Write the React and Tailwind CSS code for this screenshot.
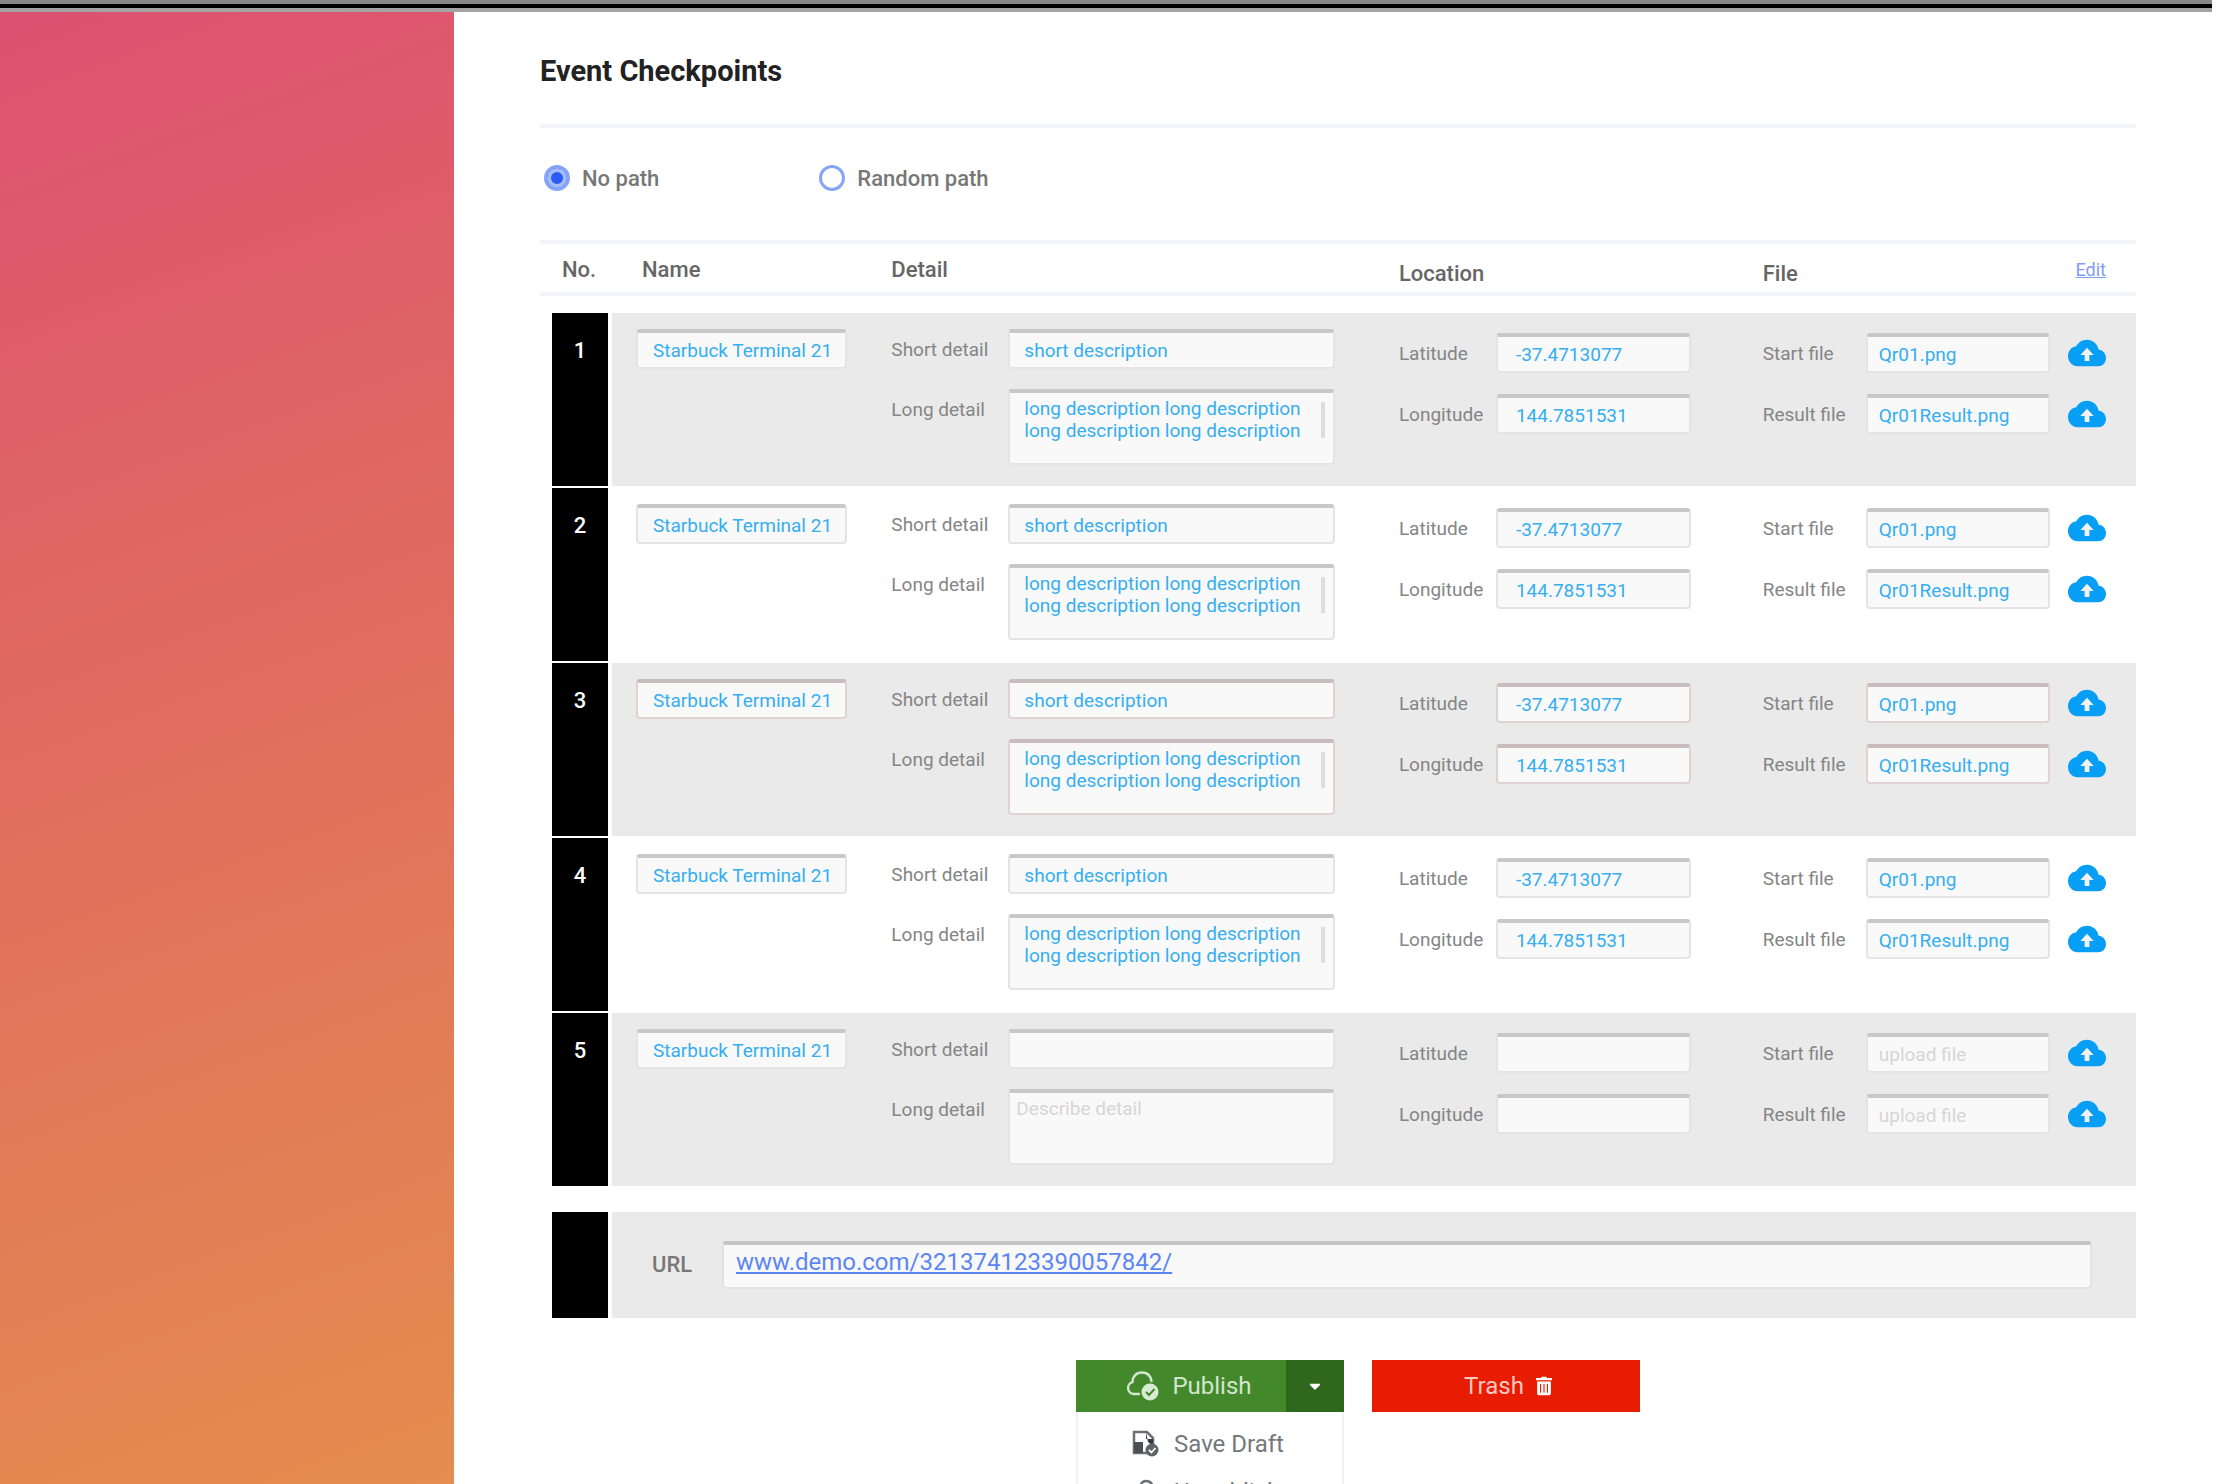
import React from "react";
import { FaTrashAlt, FaCaretDown } from "react-icons/fa";

const rows = [
  { no: 1, filled: true },
  { no: 2, filled: true },
  { no: 3, filled: true, error: true },
  { no: 4, filled: true },
  { no: 5, filled: false },
];

const okField =
  "min-w-0 rounded-[4px] border-2 border-[#e4e4e4] border-t-4 border-t-[#c8c8c8] bg-[#f9f9f9] text-[#35aef2] outline-none placeholder:text-[#d6d6d6]";
const errorField =
  "min-w-0 rounded-[4px] border-2 border-[#e2d2d2] border-t-4 border-t-[#c9bcbc] bg-[#f9f9f9] text-[#35aef2] outline-none placeholder:text-[#d6d6d6]";

function CloudUpload() {
  return (
    <svg viewBox="0 0 40 28" className="h-7 w-[38px]" aria-hidden="true">
      <path
        d="M32.3 10.6C31.2 4.5 26.1 0 20 0 15 0 10.700 2.900 8.600 7 3.600 7.700 0 12 0 17.200 0 23 4.500 28 10 28h21.700C36.300 28 40 24.200 40 19.300c0-4.600-3.500-8.400-7.700-8.700z"
        fill="#069ff5"
      />
      <path d="M20 8.500l-7 7.500h4.500v6.500h5V16H27z" fill="#f2f2f2" />
    </svg>
  );
}

function PublishCloud() {
  return (
    <svg viewBox="0 0 34 30" className="h-[30px] w-[34px]" fill="none" aria-hidden="true">
      <path
        d="M13 23H8a6 6 0 0 1-1.500-11.800C6.500 5 10.500 1.500 16 1.500c5 0 8.500 3 9.500 8.500"
        stroke="#d3e6cd"
        strokeWidth="2.400"
        strokeLinecap="round"
      />
      <circle cx="24" cy="21" r="8.500" fill="#d9ead4" />
      <path d="M20 21l3 3 5.500-6" stroke="#43892c" strokeWidth="2" />
    </svg>
  );
}

function DraftIcon() {
  return (
    <svg viewBox="0 0 28 28" className="h-7 w-7" fill="none" aria-hidden="true">
      <path d="M2 2h13l6 6v15H2z" stroke="#6a7075" strokeWidth="2.500" />
      <path d="M2 12h9v11H2z" fill="#4a4f54" />
      <path d="M14 2v7h7v7l-5-4z" fill="#33383c" />
      <circle cx="20" cy="20" r="6.500" fill="#5d6368" />
      <path d="M17 20l2.500 2.500L23.500 18" stroke="#fff" strokeWidth="1.800" />
    </svg>
  );
}

function UnpublishIcon() {
  return (
    <svg viewBox="0 0 28 28" className="h-7 w-7" fill="none" aria-hidden="true">
      <path
        d="M8 20a6 6 0 0 1 0-11C9 5 11 3 14 3s6 2 7 6a6 6 0 0 1-1 11M14 25V12M10 16l4-4 4 4"
        stroke="#6a7075"
        strokeWidth="2.400"
      />
    </svg>
  );
}

function Field({ id, label, labelClass, error, value, placeholder, pad = "px-[11px]", children }) {
  return (
    <div className="flex h-10 items-center">
      <label htmlFor={id} className={labelClass + " shrink-0 pt-0.5"}>
        {label}
      </label>
      <input
        id={id}
        defaultValue={value}
        placeholder={placeholder}
        className={(error ? errorField : okField) + " h-10 flex-1 " + pad}
      />
      {children}
    </div>
  );
}

function Row({ no, filled, error }) {
  const bg = no % 2 ? "bg-[#eaeaea]" : "bg-white";
  const cell = bg + " h-[175px] border-b-2 border-white align-top ";
  const v = (s) => (filled ? s : "");
  return (
    <tr>
      <td className="border-b-2 border-l-12 border-r-4 border-white bg-black p-0 pt-6 text-center align-top text-[22px] leading-7 font-medium text-white">
        {no}
      </td>
      <td className={cell + "pt-4 pr-5 pb-0 pl-6"}>
        <input
          aria-label={"Name " + no}
          defaultValue="Starbuck Terminal 21"
          className={(error ? errorField : okField) + " h-10 w-full pl-[15px]"}
        />
      </td>
      <td className={cell + "pt-4 pr-10 pb-0 pl-6"}>
        <div className="flex flex-col gap-5">
          <Field
            id={"short" + no}
            label="Short detail"
            labelClass="w-[117px]"
            error={error}
            value={v("short description")}
            pad="px-[14px]"
          />
          <div className="flex items-start">
            <label htmlFor={"long" + no} className="w-[117px] shrink-0 pt-[7px] leading-7">
              Long detail
            </label>
            <div className={(error ? errorField : okField) + " flex h-[76px] flex-1 p-0 pt-[5px]"}>
              <textarea
                id={"long" + no}
                defaultValue={v("long description long description long description long description")}
                placeholder="Describe detail"
                className={
                  (filled ? "pl-[14px]" : "pl-1.5") +
                  " h-full min-w-0 flex-1 resize-none overflow-hidden bg-transparent leading-[22px] outline-none placeholder:text-[#d6d6d6]"
                }
              />
              {filled && <span className="mt-1 mr-2 h-9 w-1 bg-[#dedede]" />}
            </div>
          </div>
        </div>
      </td>
      <td className={cell + "pt-5 pr-12 pb-0 pl-6"}>
        <div className="flex flex-col gap-[21px]">
          <Field id={"lat" + no} label="Latitude" labelClass="w-[97px]" error={error} value={v("-37.4713077")} pad="px-[18px]" />
          <Field id={"lng" + no} label="Longitude" labelClass="w-[97px]" error={error} value={v("144.7851531")} pad="px-[18px]" />
        </div>
      </td>
      <td className={cell + "pt-5 pr-7 pb-0 pl-6"}>
        <div className="flex flex-col gap-[21px]">
          <Field
            id={"start" + no}
            label="Start file"
            labelClass="w-[103px]"
            error={error}
            value={v("Qr01.png")}
            placeholder="upload file"
          >
            <button className="mr-0.5 ml-[18px]" aria-label="Upload start file">
              <CloudUpload />
            </button>
          </Field>
          <Field
            id={"result" + no}
            label="Result file"
            labelClass="w-[103px]"
            error={error}
            value={v("Qr01Result.png")}
            placeholder="upload file"
          >
            <button className="mr-0.5 ml-[18px]" aria-label="Upload result file">
              <CloudUpload />
            </button>
          </Field>
        </div>
      </td>
    </tr>
  );
}

function PathOption({ label, defaultChecked }) {
  return (
    <label className="flex items-center gap-3">
      <input
        type="radio"
        name="path"
        defaultChecked={defaultChecked}
        className="h-[26px] w-[26px] appearance-none rounded-full border-[3px] border-[#86a4fa] bg-white checked:bg-[#2a5bf5] checked:shadow-[inset_0_0_0_4px_#a3bafb]"
      />
      {label}
    </label>
  );
}

export default function App() {
  return (
    <div className="flex h-screen flex-col overflow-hidden bg-white font-['Roboto',sans-serif] text-[19px] text-[#858585]">
      <div className="mr-1 h-3 shrink-0 border-t-4 border-b-4 border-t-[#888888] border-b-[#a3a3a3] bg-black" />
      <div className="flex min-h-0 flex-1">
        <aside className="w-[454px] shrink-0 bg-[linear-gradient(160deg,#dd5172_0%,#e06a60_42%,#e48d4e_100%)]" />
        <main className="min-w-0 flex-1 pr-20 pl-[86px]">
          <h1 className="flex h-[112px] items-center pt-2 text-[29px] font-bold text-[#222]">Event Checkpoints</h1>
          <div className="flex h-[116px] items-center gap-[160px] border-t-4 border-[#f2f5f9] pb-3 pl-1 text-[22px] font-medium text-[#777]">
            <PathOption label="No path" defaultChecked />
            <PathOption label="Random path" />
          </div>
          <table className="w-full table-fixed border-separate border-spacing-0">
            <colgroup>
              <col className="w-[72px]" />
              <col className="w-[16%]" />
              <col className="w-[31.8%]" />
              <col className="w-[22.8%]" />
              <col />
            </colgroup>
            <thead className="text-left text-[22px] leading-7 text-[#666]">
              <tr>
                <th className="h-14 border-y-4 border-[#f2f5f9] p-0 pt-1 pl-[22px] font-medium">No.</th>
                <th className="h-14 border-y-4 border-[#f2f5f9] p-0 pt-1 pl-[30px] font-medium">Name</th>
                <th className="h-14 border-y-4 border-[#f2f5f9] p-0 pt-1 pl-6 font-medium">Detail</th>
                <th className="h-14 border-y-4 border-[#f2f5f9] p-0 pt-3 pl-6 font-medium">Location</th>
                <th className="h-14 border-y-4 border-[#f2f5f9] p-0 pt-1 pr-[30px] pl-6 font-medium">
                  <div className="flex items-center justify-between">
                    <span className="pt-2">File</span>
                    <a href="#edit" className="text-[18px] font-normal text-[#7f9df9] underline">
                      Edit
                    </a>
                  </div>
                </th>
              </tr>
            </thead>
            <tbody>
              <tr aria-hidden="true">
                <td colSpan={5} className="h-[17px] p-0" />
              </tr>
              {rows.map((r) => (
                <Row key={r.no} {...r} />
              ))}
            </tbody>
          </table>
          <div className="mt-6 ml-3 flex h-[106px] border-l-56 border-black">
            <div className="ml-1 flex flex-1 items-center bg-[#eaeaea] pr-11 pl-10">
              <label htmlFor="url" className="w-[70px] shrink-0 pb-0.5 text-[22px] font-medium text-[#777]">
                URL
              </label>
              <div className="flex h-12 flex-1 items-center rounded-[4px] border-2 border-t-4 border-[#e2e2e2] border-t-[#c4c4c4] bg-[#f9f9f9] px-3 pb-2">
                <a id="url" href="#demo" className="text-[24px] text-[#5c85f7] underline">
                  www.demo.com/321374123390057842/
                </a>
              </div>
            </div>
          </div>
          <div className="mt-[42px] flex justify-center gap-7 pl-10 text-[24px] leading-7">
            <div className="relative flex h-[52px] w-[268px]">
              <button className="flex flex-1 items-center justify-center bg-[#43892c] pl-4 text-[#d3e6cd]">
                <PublishCloud />
                <span className="ml-3">Publish</span>
              </button>
              <button className="flex w-[58px] items-center justify-center bg-[#2f671c] text-white" aria-label="More actions">
                <FaCaretDown className="h-[18px] w-[18px]" />
              </button>
              <div className="absolute top-full left-0 w-full border-x-2 border-[#f1f1f1] bg-white pt-4 text-[#74787b]">
                <button className="flex h-8 w-full items-center gap-[14px] pl-[54px]">
                  <DraftIcon />
                  Save Draft
                </button>
                <button className="mt-4 flex h-8 w-full items-center gap-[14px] pl-[54px]">
                  <UnpublishIcon />
                  Unpublish
                </button>
              </div>
            </div>
            <button className="flex h-[52px] w-[268px] items-center justify-center gap-3 bg-[#e81c00] pl-1 text-[#fbc9c2]">
              Trash
              <FaTrashAlt className="h-5 w-4 text-white" />
            </button>
          </div>
        </main>
      </div>
    </div>
  );
}
